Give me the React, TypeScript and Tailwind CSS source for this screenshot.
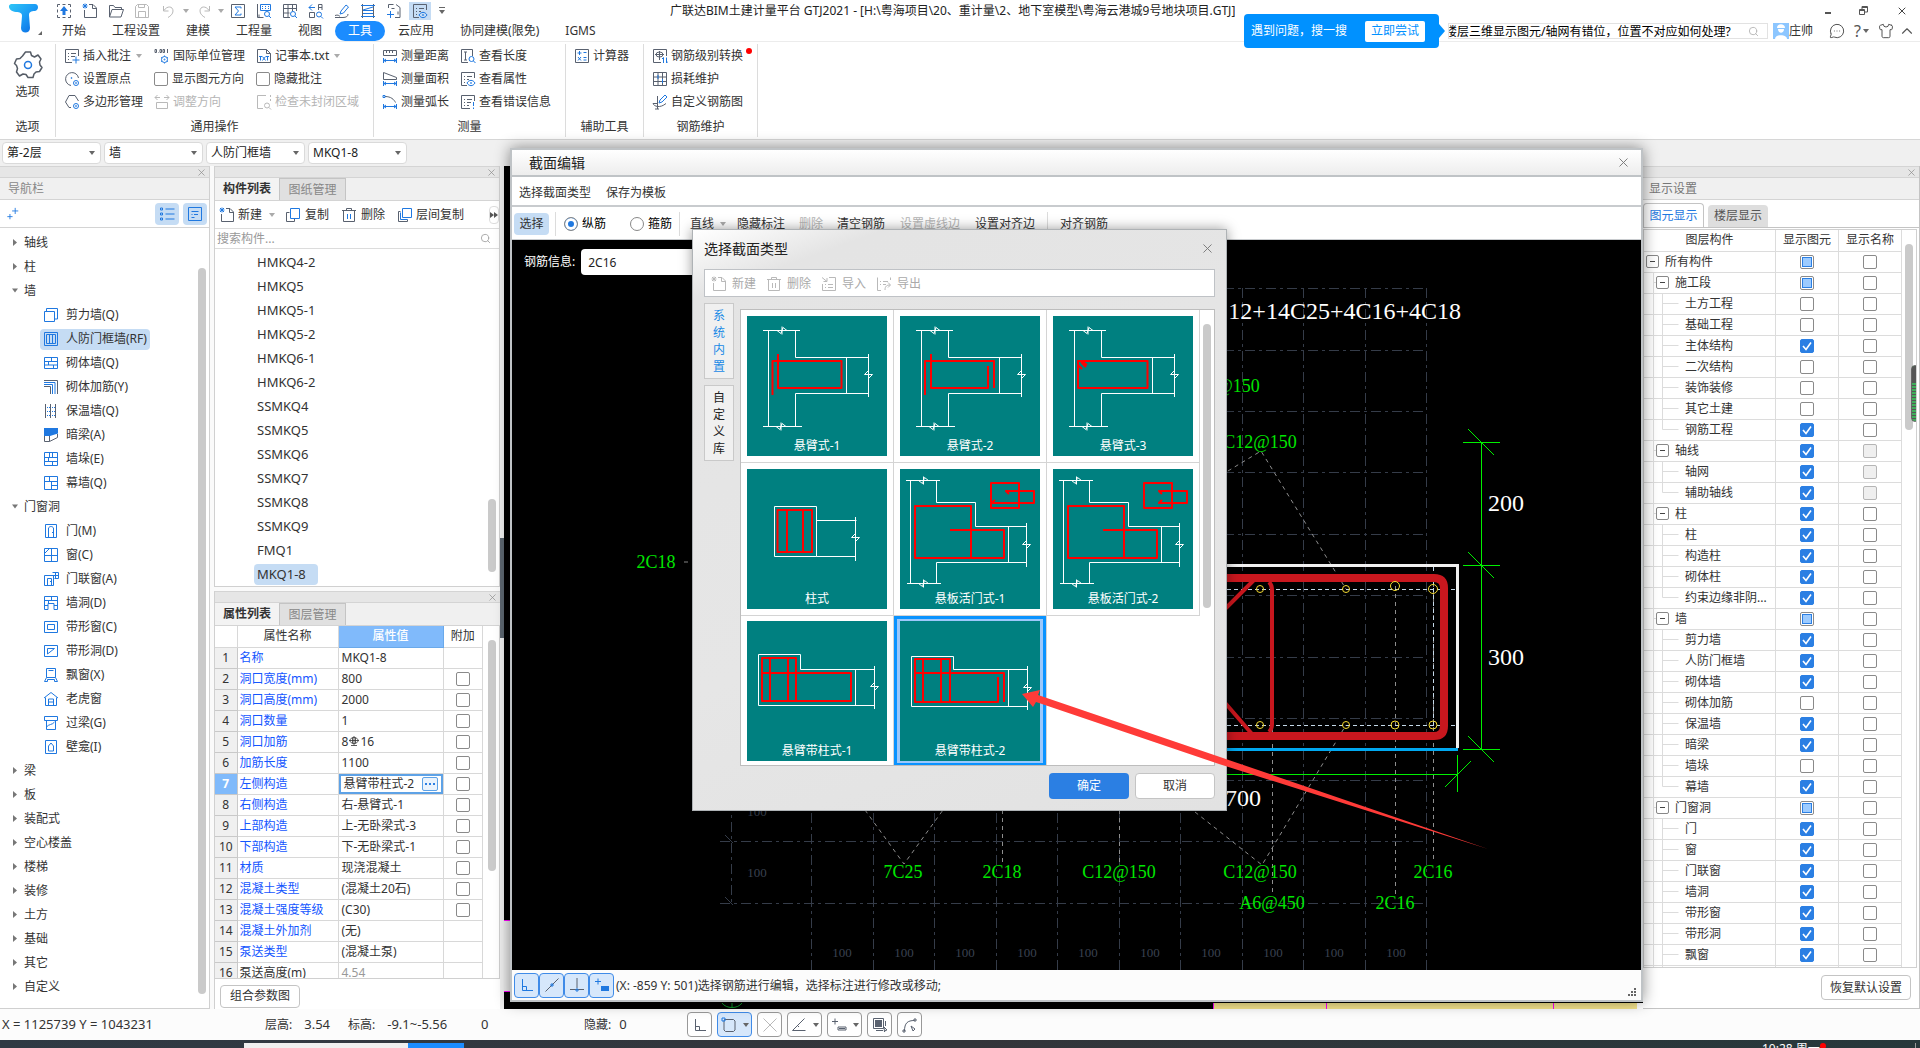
import { useState, type ReactNode } from 'react';
import { ChevronUp, MessageCircleMore, Search, Shirt, X } from 'lucide-react';
import clsx from 'clsx';

const FONT = "font-['Noto_Sans','Noto_Sans_CJK_SC',sans-serif]";

const SLATE = '#59616f';
const BLUE = '#1f78e0';
const MUTED = '#b9b9b9';

// d = slate stroke, b = blue stroke, f = blue fill
type Glyph = { d?: string; b?: string; f?: string };

const GLYPHS: Record<string, Glyph> = {
  upload: { d: 'M1.5 4V1.5H4M6.5 1.5h3M12 1.5h2.5V4M14.5 6.5v3M14.5 12v2.5H12M9.5 14.5h-3M4 14.5H1.5V12M1.5 9.5v-3', f: 'M8 3l4 5H9.5v4h-3V8H4z' },
  create: { d: 'M7 1.5h4l3.5 3.5v9.5h-12V7M10.5 1.5v4h4', b: 'M1 1l4 4M5 1L1 5M3 .5v5M.5 3h5' },
  open: { d: 'M1.5 14V2.5h4l1.5 2h6.5v2M1.5 14L4 6.5h11.5L13 14z' },
  save: { d: 'M1.5 3.5l2-2h9l2 2v11h-13zM4.5 14V8.5h7V14M4.5 1.5v3h6v-3' },
  undo: { d: 'M2.5 3v5h5M3 7.5C6 2.5 12 3 12 8c0 3-2.5 5-5 6.5' },
  redo: { d: 'M13.5 3v5h-5M13 7.5C10 2.5 4 3 4 8c0 3 2.5 5 5 6.5' },
  sum: { d: 'M1.5 1.5h13v13h-13z', b: 'M11 5.5V4H5l3.5 4L5 12h6v-1.5' },
  sheetFind: { d: 'M1.5 1v13.5h6M3 14.5v-3', b: 'M4.5 1.5h10v6h-10zM6 3.5h1M9 3.5h1M12 3.5h1M6 5.5h1M9 5.5h1M12 5.5h1M13.5 11a2.5 2.5 0 1 1-5 0 2.5 2.5 0 0 1 5 0M13 13l2 2' },
  gridFind: { d: 'M8 14.5H1.5v-13h13V8M1.5 5.5h13M1.5 10h6M6 1.5v13M10.5 1.5V8', b: 'M13.5 11a2.5 2.5 0 1 1-5 0 2.5 2.5 0 0 1 5 0M13 13l2 2' },
  swapFind: { d: 'M1.5 9.5h5v5h-5zM10.5 1.5h3.5V7M10.5 1.5V7M10.5 4.5H14', b: 'M1 4.5h6M4 1.5L1 4.5l3 3M13.5 11.5a2.5 2.5 0 1 1-5 0 2.5 2.5 0 0 1 5 0M13 13.5l2 2' },
  brush: { d: 'M1 14.5h8c3 0 5-1 5-3.5M1 12.5c3-1 4 0 5 1', b: 'M6 11l1-3 5-6 2.5 2-5 6z' },
  frame: { d: 'M2.5 1v14M13.5 1v14', b: 'M1 2.5h14M3 7.5h10M3 10.5h10M1 13.5h14M3 7L13 4' },
  addSheet: { d: 'M7.5 1.5h-5V5M10 1.5l4 3v10H9M12 8.5v3M5.5 5.5h3', b: 'M1 11.5h7M4.5 8v7' },
  sheetEye: { d: 'M7 14.5H1.5v-13h13V7M4 5.5h1M7 5.5h5M4 8.5h1M7 8.5h2M4 11.5h1', b: 'M7 12c2-3.5 6-3.5 8 0-2 3.5-6 3.5-8 0M11.5 12a.5.5 0 1 1-1 0 .5.5 0 0 1 1 0' },
  noteAdd: { d: 'M8 14.5H1.5v-13h13V8M4 5.5h1M7 5.5h5M4 8.5h1M7 8.5h4M4 11.5h1', b: 'M8.5 12h7M12 8.5v7' },
  unit: { d: 'M1 1.5v3h1.5v-3zM4 4.5h.5M6 1.5v3h1.5v-3zM9 1.5v3h1.5v-3zM13.5 1v4', b: 'M13.5 11.5a3 3 0 1 1-6 0 3 3 0 0 1 6 0M11 11.5a.5.5 0 1 1-1 0 .5.5 0 0 1 1 0M10.5 7.5v1M10.5 14.5v1M7 9.5l1 .5M14 9.5l-1 .5M7 13.5l1-.5M14 13.5l-1-.5' },
  txt: { d: 'M1.5 1.5h9l4 4v9h-13zM10.5 1.5v4h4', b: 'M3 8.5h3M4.5 8.5v4M6.5 8.5l3 4M9.5 8.5l-3 4M10 8.5h3M11.5 8.5v4' },
  origin: { d: 'M7 14.5A6.5 6.5 0 1 1 14.5 7', b: 'M8 7a.5.5 0 1 1-1 0 .5.5 0 0 1 1 0M14.5 12a2.5 2.5 0 1 1-5 0 2.5 2.5 0 0 1 5 0M12.5 12a.5.5 0 1 1-1 0 .5.5 0 0 1 1 0' },
  polygon: { d: 'M7 13.5H5L1.5 8 5 1.5h6L14.5 7', b: 'M14.5 12a2.5 2.5 0 1 1-5 0 2.5 2.5 0 0 1 5 0M12.5 12a.5.5 0 1 1-1 0 .5.5 0 0 1 1 0' },
  adjust: { d: 'M2.5 14.5v-6h11v6zM1 3.5h5M3.5 1L1 3.5 3.5 6M15 3.5h-5M12.5 1L15 3.5 12.5 6' },
  region: { d: 'M7 14.5H1.5v-13H10M14.5 1v2M14.5 5v2M13.5 11.5a2.5 2.5 0 1 1-5 0 2.5 2.5 0 0 1 5 0M13 13.5l2 2' },
  dist: { d: 'M1.5 2.5h13v5h-13zM4.5 2.5V5M7.5 2.5V5M10.5 2.5V5', b: 'M1.5 10v5M14.5 10v5M2 12.5h12M4 11l-2 1.5L4 14M12 11l2 1.5-2 1.5' },
  area: { d: 'M1.5 8.5v-7l13 5v2z', b: 'M1.5 10v5M14.5 10v5M2 12.5h12M4 11l-2 1.5L4 14M12 11l2 1.5-2 1.5' },
  arc: { d: 'M3 2.5c6 0 9 3 10.5 6', b: 'M1 1.5h2v2H1zM1.5 10v5M14.5 10v5M2 12.5h12M4 11l-2 1.5L4 14M12 11l2 1.5-2 1.5' },
  seeLen: { d: 'M8 14.5H1.5v-13h11V8M4 4h3M5.5 4v8M4 12h3', b: 'M14 11a2.5 2.5 0 1 1-5 0 2.5 2.5 0 0 1 5 0M13.5 13l2 2' },
  seeErr: { d: 'M10 14.5H1.5v-13h13V7M4 5.5h1M7 5.5h5M4 8.5h1M7 8.5h4M4 11.5h1M7 11.5h2', b: 'M13.5 8v4M13.5 13.5v1.5' },
  calc: { d: 'M1.5 1.5h13v13h-13z', b: 'M3.5 5h4M5.5 3v4M9.5 4.5h3M9.5 9.5h3M9.5 12h3M4 9l3 3.5M7 9l-3 3.5' },
  rebarConv: { d: 'M9 14.5H1.5v-13h13V8M3 6.5h9M7.5 3v9M11 6.5a3.5 2.5 0 1 1-7 0 3.5 2.5 0 0 1 7 0', b: 'M11.5 15V9.5L10 11M14.5 9.5V15L16 13.5' },
  grid: { d: 'M1.5 1.5h13v13h-13zM1.5 6h13M1.5 10.5h13M6 1.5v13M10.5 1.5v13', b: 'M6 4v4M10.5 8v4' },
  rebarEdit: { d: 'M5.5 2v13M1 9.5c1 3 7 5 13 0M1 9.5h4M3 15h4', b: 'M7 9l1-3 5-5 2 2-5 5z' },
  copy: { d: 'M4.5 5.5h-3v9h8v-3', b: 'M5.5 1.5h9v10h-9z' },
  trash: { d: 'M1 3.5h14M5.5 3.5v-2h5v2M2.5 3.5v11h11v-11', b: 'M6.5 7v5M9.5 7v5' },
  layerCopy: { d: 'M3.5 4.5h-2v10h9v-2', b: 'M5.5 1.5h9v9h-9zM3.5 5.5v7h7' },
  importIn: { d: 'M1 1.5l5 4M6 2v3.5H2.5M8 1.5h6.5v13h-13V8M7 8.5h5M7 11.5h5M4 8.5h1M4 11.5h1' },
  exportOut: { d: 'M14.5 4V1.5M5 14.5H1.5v-13M4 5.5h1M7 5.5h5M4 8.5h1M7 8.5h3M9 14c0-4 2-5 5-5M12 6.5L14.5 9 12 11.5' },
  list: { b: 'M1.5 2h2v2h-2zM1.5 7h2v2h-2zM1.5 12h2v2h-2zM6.5 3h9M6.5 8h9M6.5 13h9' },
  card: { b: 'M1.5 1.5h13v13h-13zM4.5 5.5h7M4.5 8.5h1M7 8.5h4M4.5 11.5h3' },
  sparkle: { b: 'M10.5 1v7M7 4.5h7M4.5 8v6M1.5 11h6' },
  wall: { b: 'M1.5 4.5h10v10h-10zM3.5 4v-2.5h11V12h-2.5' },
  frameWall: { b: 'M1.5 1.5h13v13h-13zM3.5 3.5h9v9h-9zM6.5 3.5v9M9.5 3.5v9' },
  brick: { b: 'M1.5 2.5h13v11h-13zM1.5 6.5h13M1.5 10h13M8.5 2.5v4M5.5 6.5V10M10.5 10v3.5' },
  brickBar: { d: 'M1 1.5h13.5V15M1 7.5h6.5V15', b: 'M1 3.5h11V15M1 5.5h8.5V15' },
  insul: { d: 'M2.5 1v14M7.5 1v14M12.5 1v14', b: 'M4 4.5h1M6 4.5h1M9 4.5h1M11 4.5h1M4 8.5h1M6 8.5h1M9 8.5h1M11 8.5h1M4 12.5h1M6 12.5h1M9 12.5h1M11 12.5h1' },
  hiddenBeam: { f: 'M1 1h14v5.5L7 9H1z', d: 'M1.5 9v5.5h5l8-4V7M6.5 9v5.5' },
  buttress: { b: 'M1.5 1.5h13v13h-13zM1.5 6.5h13M1.5 10.5h13M5.5 6.5v4M9.5 1.5v5M6.5 1.5v5M9.5 10.5v4' },
  curtain: { b: 'M1.5 1.5h13v13h-13zM1.5 6.5h13M6.5 1.5v5M8.5 6.5v8M8.5 10.5h6' },
  door: { b: 'M2.5 1.5h11v13h-11zM5.5 14.5V5c1-2 4-2 5 0v9.5M9 9.5h1.5' },
  window: { b: 'M1.5 1.5h13v13h-13zM8.5 1.5v13M1.5 8.5h13M2 6l4.5-4.5' },
  doorWin: { b: 'M1.5 4.5h9v10h-9zM4.5 14.5v-7h4v7M7 10.5h1M9.5 1.5h6v6h-4M12.5 1.5v6M9.5 4.5h6' },
  wallHole: { b: 'M1.5 14.5v-13h13v13h-3.5v-6h-6v6zM1.5 5.5h13M8.5 1.5v4M1.5 10.5H5M11 10.5h3.5M5.5 5.5v3' },
  bandWin: { b: 'M1.5 2.5h13v11h-13zM4.5 5.5h7v5h-7z' },
  bandHole: { b: 'M1.5 2.5h13v11h-13zM4.5 11V5.5h7z' },
  bay: { b: 'M3.5 1.5h9v9h-9zM5.5 3.5h5M3.5 10.5l-2 4h3v-2h7v2h3l-2-4' },
  dormer: { b: 'M1 7l7-5.5L15 7M2.5 6.5v8h11v-8M5.5 14V8h5v6M5.5 11h5' },
  lintel: { b: 'M1.5 1.5h13v4h-13zM3.5 5.5v9h9v-9M3.5 12c2-3 6-2 8-5' },
  niche: { b: 'M2.5 1.5h11v13h-11zM5.5 12V7L8 4l2.5 3v5z' },
  ortho: { d: 'M3.5 2v11.5H14M3.5 9.5h4v4' },
  orthoB: { b: 'M3.5 2v11.5H14M3.5 9.5h4v4' },
  diag: { d: 'M1.5 14.5l13-13', b: 'M7 7h2v2H7z' },
  perp: { d: 'M1 12.5h14M8 1v10', b: 'M7 12h2v2H7z' },
  plusBar: { b: 'M1 4.5h6M4 1.5v6', f: 'M7 9h8v5H7z' },
  plusBarD: { d: 'M1 4.5h6M4 1.5v6M7 10h8v3H7zM8 11.5h6' },
  roundBox: { d: 'M3.5 2.5h9l1.5 1.5v9l-1.5 1.5h-8L3 13V4z', b: 'M1 1h3v3H1z' },
  cross: { d: 'M1.5 1.5l13 13M14.5 1.5l-13 13' },
  angle: { d: 'M1.5 13.5h13M1.5 13.5l12-12M6 8l2 2' },
  layers: { d: 'M4 13.5h7M13.5 4v5M1.5 1.5h10v10h-10zM3 3.5h7M3 4.5h7M3 5.5h7M3 6.5h7M3 7.5h7M3 8.5h7M3 9.5h7M12 10l3 3-2 .5-.5 1.5z' },
  curve: { d: 'M2.5 14c0-8 3-10.5 10-10.5M1 13h2v2H1zM12 2h2v2h-2zM9 9l4 3-2 2z' },
};

function Icon({ name, muted, size = 16 }: { name: string; muted?: boolean; size?: number }) {
  const g = GLYPHS[name];
  return (
    <svg width={size} height={size} viewBox="0 0 16 16" fill="none" className="shrink-0" aria-hidden="true">
      {g.f && <path d={g.f} fill={BLUE} />}
      {g.d && <path d={g.d} stroke={muted ? MUTED : SLATE} />}
      {g.b && <path d={g.b} stroke={muted ? MUTED : BLUE} />}
    </svg>
  );
}

function Caret({ muted }: { muted?: boolean }) {
  return (
    <svg width="6" height="4" viewBox="0 0 6 4" className="shrink-0" aria-hidden="true">
      <path d="M0 0h6L3 4z" fill={muted ? '#aaa' : '#666'} />
    </svg>
  );
}

type CheckState = 'on' | 'off' | 'mixed' | 'disabled';

function Check({ state = 'off', label, id }: { state?: CheckState; label?: string; id?: string }) {
  return (
    <span className="relative inline-grid size-3.5 shrink-0 place-items-center align-middle">
      <input
        id={id}
        type="checkbox"
        aria-label={label}
        defaultChecked={state === 'on'}
        disabled={state === 'disabled'}
        className="peer size-3.5 appearance-none rounded-xs border border-[#8a8a8a] bg-white checked:border-[#2b7fe3] checked:bg-[#2b7fe3] disabled:border-[#b5b5b5] disabled:bg-[#efefef]"
      />
      <svg viewBox="0 0 14 14" fill="none" className="pointer-events-none absolute hidden size-3.5 peer-checked:block">
        <path d="M3 7l3 3.5 5-7" stroke="#fff" strokeWidth="1.6" />
      </svg>
      {state === 'mixed' && <span className="pointer-events-none absolute size-2.5 border border-[#2b7fe3] bg-[#9ccbff]" />}
    </span>
  );
}

/* ---------- header ---------- */

const QUICK: { icon: string; muted?: boolean; caret?: boolean; on?: boolean }[] = [
  { icon: 'upload' }, { icon: 'create' }, { icon: 'open' }, { icon: 'save', muted: true },
  { icon: 'undo', muted: true, caret: true }, { icon: 'redo', muted: true, caret: true },
  { icon: 'sum' }, { icon: 'sheetFind' }, { icon: 'gridFind' }, { icon: 'swapFind' },
  { icon: 'brush' }, { icon: 'frame' }, { icon: 'addSheet' }, { icon: 'sheetEye', on: true },
];

const TABS = ['开始', '工程设置', '建模', '工程量', '视图', '工具', '云应用', '协同建模(限免)', 'IGMS'];

function Header() {
  const [tab, setTab] = useState('工具');
  return (
    <header className="flex h-[42px] shrink-0 border-b border-[#ececec] bg-white">
      <div className="flex w-[49px] shrink-0 pl-2">
        <svg width="38" height="36" viewBox="0 0 38 36" aria-label="广联达">
          <defs>
            <linearGradient id="brand" x1="0" y1="0" x2="1" y2="1">
              <stop offset="0" stopColor="#2fc6f6" />
              <stop offset="0.5" stopColor="#1a9bf5" />
              <stop offset="1" stopColor="#0a66e0" />
            </linearGradient>
          </defs>
          <path d="M3 4h24c4 0 4 6 0 7-4 0-6 1-6 4l1 13c0 6-9 6-9 0l1-12c0-3-2-4-6-4C1 12-1 5 3 4z" fill="url(#brand)" />
          <path d="M34 31v4h-4z" fill="#666" />
        </svg>
      </div>
      <div className="flex min-w-0 flex-1 flex-col">
        <div className="flex h-[21px] shrink-0 items-center">
          <div className="flex w-[621px] shrink-0 items-center pl-0.5">
            {QUICK.map((q) => (
              <button key={q.icon} className={clsx('flex h-[18px] items-center', q.caret ? 'w-[35px] gap-1.5 pl-1.5' : q.on ? 'mx-0.5 w-[22px] justify-center bg-[#c5dcf4]' : 'w-[26px] justify-center')}>
                <Icon name={q.icon} muted={q.muted} />
                {q.caret && <Caret muted />}
              </button>
            ))}
            <button aria-label="自定义快速访问" className="ml-1.5 flex flex-col items-center gap-0.5">
              <span className="h-px w-1.5 bg-[#666]" />
              <Caret />
            </button>
          </div>
          <h1 className="truncate text-xs text-[#222]">广联达BIM土建计量平台 GTJ2021 - [H:\粤海项目\20、重计量\2、地下室模型\粤海云港城9号地块项目.GTJ]</h1>
          <div className="ml-auto flex shrink-0 items-center gap-7 pr-3">
            <button aria-label="最小化" className="mt-1 h-0.5 w-1.5 bg-[#555]" />
            <button aria-label="还原">
              <svg width="9" height="9" viewBox="0 0 9 9" fill="none" stroke="#555">
                <path d="M.5 3.5h5v5h-5zM3 3V.5h5.5V6H6M.5 4.5h5M3 1.5h5" />
              </svg>
            </button>
            <button aria-label="关闭"><X size={12} color="#444" /></button>
          </div>
        </div>
        <div className="flex min-h-0 flex-1 items-center">
          <nav className="flex">
            {TABS.map((t) => (
              <button key={t} onClick={() => setTab(t)} className={clsx('h-5 rounded-full px-[13px] text-xs leading-5', tab === t ? 'bg-[#1b8cff] text-white' : 'text-[#333]')}>
                {t}
              </button>
            ))}
          </nav>
          <div className="relative ml-auto flex h-4 w-[320px] items-center border border-[#e2e2e2] bg-white">
            <div className="absolute right-full z-10 mr-2.5 flex h-[34px] w-[195px] items-center justify-between rounded-sm bg-[#0091ff] pr-3.5 pl-[7px] text-xs text-white">
              遇到问题，搜一搜
              <button className="h-[21px] w-[60px] rounded-xs bg-white text-[#0091ff]">立即尝试</button>
              <svg width="6" height="14" viewBox="0 0 6 14" className="absolute left-full" aria-hidden="true"><path d="M0 0l6 7-6 7z" fill="#0091ff" /></svg>
            </div>
            <input aria-label="搜索问题" defaultValue="楼层三维显示图元/轴网有错位，位置不对应如何处理?" className="h-full min-w-0 flex-1 -indent-1 text-xs leading-4 text-black outline-none" />
            <Search size={11} color="#b5b5b5" className="mr-2" />
          </div>
          <button className="ml-[5px] flex items-center text-xs text-[#333]">
            <svg width="16" height="16" viewBox="0 0 16 16" aria-hidden="true">
              <path d="M0 0h16v16H0z" fill="#8cc6ff" />
              <path d="M4 5c0-5 8-5 8 0H4zM5 6h6c0 5-6 5-6 0zM2 16c0-5 12-5 12 0z" fill="#fff" />
            </svg>
            庄帅
          </button>
          <div className="flex items-center pr-1 pl-4 text-[#555]">
            <button aria-label="消息" className="w-[25px]"><MessageCircleMore size={16} strokeWidth={1.5} /></button>
            <button aria-label="帮助" className="flex w-6 items-center gap-0.5 text-base leading-4">?<Caret /></button>
            <button aria-label="皮肤" className="w-5"><Shirt size={16} strokeWidth={1.5} /></button>
            <button aria-label="收起"><ChevronUp size={18} strokeWidth={1.5} /></button>
          </div>
        </div>
      </div>
    </header>
  );
}

/* ---------- ribbon ---------- */

function Tool({ icon, label, muted, caret, dot }: { icon: string; label: string; muted?: boolean; caret?: boolean; dot?: boolean }) {
  return (
    <button className={clsx('flex h-[23px] items-center gap-[3px] whitespace-nowrap', muted && 'text-[#b5b5b5]')}>
      <Icon name={icon} muted={muted} />
      {label}
      {caret && <span className="ml-0.5"><Caret muted /></span>}
      {dot && <span className="mb-2.5 size-1.5 rounded-full bg-[#f00]" />}
    </button>
  );
}

function CheckTool({ label, id }: { label: string; id: string }) {
  return (
    <label htmlFor={id} className="flex h-[23px] items-center gap-1 whitespace-nowrap">
      <Check id={id} />
      {label}
    </label>
  );
}

function Group({ title, className, children }: { title: string; className: string; children: ReactNode }) {
  return (
    <section className={clsx('my-0.5 flex flex-col border-r border-[#dcdcdc]', className)}>
      <div className="flex flex-1">{children}</div>
      <h2 className="h-[18px] text-center leading-4">{title}</h2>
    </section>
  );
}

function Ribbon() {
  return (
    <div className="flex h-[98px] shrink-0 border-b border-[#d6d6d6] bg-white text-xs text-[#333]">
      <Group title="选项" className="w-14">
        <button className="flex w-full flex-col items-center pt-1.5">
          <svg width="30" height="30" viewBox="0 0 30 30" fill="none" aria-hidden="true">
            <path d="M12.5 2h5l1 3.5 3 1.5 3.5-2 3 4-1.5 3 .5 3 2 2.5-2.5 4-3.5.5-2 2-1 3.5h-5l-2-3-3-.5-3.5 2-3-4 1-3.5-1-3-2-2 2-4.5 3.5-.5 2.5-2.5z" stroke="#555c66" strokeWidth="1.5" strokeLinejoin="round" />
            <circle cx="15" cy="15" r="3.5" stroke={BLUE} strokeWidth="1.5" />
          </svg>
          <span className="mt-1">选项</span>
        </button>
      </Group>
      <Group title="通用操作" className="w-[318px]">
        <div className="w-[98px] pl-2">
          <Tool icon="noteAdd" label="插入批注" caret />
          <Tool icon="origin" label="设置原点" />
          <Tool icon="polygon" label="多边形管理" />
        </div>
        <div className="w-[102px]">
          <Tool icon="unit" label="国际单位管理" />
          <CheckTool id="show-dir" label="显示图元方向" />
          <Tool icon="adjust" label="调整方向" muted />
        </div>
        <div>
          <Tool icon="txt" label="记事本.txt" caret />
          <CheckTool id="hide-note" label="隐藏批注" />
          <Tool icon="region" label="检查未封闭区域" muted />
        </div>
      </Group>
      <Group title="测量" className="w-48">
        <div className="w-[86px] pl-2">
          <Tool icon="dist" label="测量距离" />
          <Tool icon="area" label="测量面积" />
          <Tool icon="arc" label="测量弧长" />
        </div>
        <div>
          <Tool icon="seeLen" label="查看长度" />
          <Tool icon="sheetEye" label="查看属性" />
          <Tool icon="seeErr" label="查看错误信息" />
        </div>
      </Group>
      <Group title="辅助工具" className="w-[78px] px-2">
        <Tool icon="calc" label="计算器" />
      </Group>
      <Group title="钢筋维护" className="w-[114px] px-2">
        <div>
          <Tool icon="rebarConv" label="钢筋级别转换" dot />
          <Tool icon="grid" label="损耗维护" />
          <Tool icon="rebarEdit" label="自定义钢筋图" />
        </div>
      </Group>
    </div>
  );
}

function Combos() {
  return (
    <div className="flex h-[26px] shrink-0 items-center gap-[3px] bg-[#f0f0f0] pl-0.5">
      {['第-2层', '墙', '人防门框墙', 'MKQ1-8'].map((v) => (
        <div key={v} className="relative flex w-[99px] items-center">
          <select aria-label={v} className="h-[22px] w-full appearance-none rounded-sm border border-[#dadada] bg-white pl-1 text-xs text-[#222]">
            <option>{v}</option>
          </select>
          <span className="pointer-events-none absolute right-1.5 flex"><Caret /></span>
        </div>
      ))}
    </div>
  );
}

/* ---------- left panels ---------- */

function Strip() {
  return (
    <div className="flex h-3 shrink-0 items-center justify-end border-y border-[#d4d4d4] bg-[#e6e6e6] pr-0.5">
      <button aria-label="关闭面板"><X size={11} color="#8a8a8a" strokeWidth={1.5} /></button>
    </div>
  );
}

type NavNode = { name: string; items?: [string, string][] };

const NAV: NavNode[] = [
  { name: '轴线' },
  { name: '柱' },
  {
    name: '墙',
    items: [
      ['wall', '剪力墙(Q)'], ['frameWall', '人防门框墙(RF)'], ['brick', '砌体墙(Q)'], ['brickBar', '砌体加筋(Y)'],
      ['insul', '保温墙(Q)'], ['hiddenBeam', '暗梁(A)'], ['buttress', '墙垛(E)'], ['curtain', '幕墙(Q)'],
    ],
  },
  {
    name: '门窗洞',
    items: [
      ['door', '门(M)'], ['window', '窗(C)'], ['doorWin', '门联窗(A)'], ['wallHole', '墙洞(D)'], ['bandWin', '带形窗(C)'],
      ['bandHole', '带形洞(D)'], ['bay', '飘窗(X)'], ['dormer', '老虎窗'], ['lintel', '过梁(G)'], ['niche', '壁龛(I)'],
    ],
  },
  { name: '梁' }, { name: '板' }, { name: '装配式' }, { name: '空心楼盖' }, { name: '楼梯' },
  { name: '装修' }, { name: '土方' }, { name: '基础' }, { name: '其它' }, { name: '自定义' },
];

function NavPanel() {
  return (
    <aside className="flex w-[210px] shrink-0 flex-col border-r border-b border-[#d0d0d0] bg-white">
      <Strip />
      <h2 className="h-[22px] shrink-0 border-b border-[#d4d4d4] bg-[#f0f0f0] pl-2 text-xs leading-[22px] text-[#888]">导航栏</h2>
      <div className="flex h-7 shrink-0 items-center gap-1 border-b border-[#d4d4d4] px-1.5">
        <button aria-label="收藏" className="mr-auto"><Icon name="sparkle" size={14} /></button>
        <button aria-label="列表" className="grid h-[22px] w-6 place-items-center rounded-sm bg-[#c5dcf4]"><Icon name="list" /></button>
        <button aria-label="详情" className="-mr-1 grid h-[22px] w-6 place-items-center rounded-sm bg-[#c5dcf4]"><Icon name="card" /></button>
      </div>
      <div className="flex min-h-0 flex-1 overflow-hidden">
        <ul className="flex-1 pt-[3px] text-xs text-[#333]">
          {NAV.map((n) => (
            <li key={n.name}>
              <button className="flex h-6 items-center pl-3">
                <svg width="12" height="8" viewBox="0 0 12 8" aria-hidden="true"><path d={n.items ? 'M0 1.5h6L3 5.5z' : 'M1 0v7l4-3.5z'} fill="#777" /></svg>
                {n.name}
              </button>
              {n.items && (
                <ul>
                  {n.items.map(([icon, label]) => (
                    <li key={label} className="flex h-6 items-center pl-10">
                      <button className={clsx('flex h-[21px] items-center gap-[7px] rounded-sm px-[3px]', icon === 'frameWall' && 'bg-[#c5dcf4]')}>
                        <Icon name={icon} />
                        {label}
                      </button>
                    </li>
                  ))}
                </ul>
              )}
            </li>
          ))}
        </ul>
        <div className="mt-10 mr-[3px] mb-3.5 w-2 rounded-full bg-[#cacaca]" />
      </div>
    </aside>
  );
}

function PanelTabs({ tabs }: { tabs: [string, string] }) {
  return (
    <div className="flex h-[23px] shrink-0 border-b border-[#d4d4d4] bg-[#f0f0f0] text-xs leading-[22px]">
      <button className="w-[65px] border-r border-[#c4c4c4] bg-[#f3f3f3] font-bold text-[#333]">{tabs[0]}</button>
      <button className="w-[66px] border-t border-r border-[#c4c4c4] bg-[#e0e0e0] text-[#888]">{tabs[1]}</button>
    </div>
  );
}

const MEMBERS = ['HMKQ4-2', 'HMKQ5', 'HMKQ5-1', 'HMKQ5-2', 'HMKQ6-1', 'HMKQ6-2', 'SSMKQ4', 'SSMKQ5', 'SSMKQ6', 'SSMKQ7', 'SSMKQ8', 'SSMKQ9', 'FMQ1', 'MKQ1-8'];

function MemberPanel() {
  return (
    <section className="flex shrink-0 flex-col border-x border-b border-[#d0d0d0] bg-white">
      <Strip />
      <PanelTabs tabs={['构件列表', '图纸管理']} />
      <div className="flex h-7 shrink-0 items-center border-b border-[#dcdcdc] pl-1 text-xs text-[#333]">
        <button className="mr-2.5 flex items-center gap-[3px]"><Icon name="create" />新建 <span className="ml-1"><Caret muted /></span></button>
        <button className="mr-3 flex items-center gap-1"><Icon name="copy" />复制</button>
        <button className="mr-3 flex items-center gap-1"><Icon name="trash" />删除</button>
        <button className="flex items-center gap-[3px]"><Icon name="layerCopy" />层间复制</button>
        <button aria-label="更多" className="ml-auto flex h-[18px] w-2.5 items-center rounded-sm border border-[#ddd]">
          <svg width="8" height="6" viewBox="0 0 8 6"><path d="M0 0l4 3-4 3zM4 0l4 3-4 3z" fill="#555" /></svg>
        </button>
      </div>
      <div className="flex h-5 shrink-0 items-center border-b border-[#dcdcdc] pr-2 pl-0.5">
        <input aria-label="搜索构件" placeholder="搜索构件..." className="min-w-0 flex-1 text-xs leading-4 outline-none placeholder:text-[#999]" />
        <Search size={11} color="#a5a5a5" />
      </div>
      <div className="flex pt-px">
        <ul className="flex-1 text-[13px] text-[#333]">
          {MEMBERS.map((m) => (
            <li key={m} className="flex h-6 items-center pl-[39px]">
              <button className={clsx('h-[21px] rounded-sm pr-3 pl-[3px] leading-5', m === 'MKQ1-8' && 'bg-[#c5dcf4]')}>{m}</button>
            </li>
          ))}
        </ul>
        <div className="mr-[3px] mb-3.5 h-[73px] w-2 self-end rounded-full bg-[#cacaca]" />
      </div>
    </section>
  );
}

const rebar = (
  <span className="inline-flex items-center">
    8
    <svg width="12" height="11" viewBox="0 0 12 11" fill="none" stroke="#333" strokeWidth="0.8" aria-label="HRB400">
      <path d="M1 4.5h10M4.500 1.500v6M7.500 1.500v6M6 0v9.500M3 9.500h6M2 4.500c0-4 8-4 8 0s-8 4-8 0" />
    </svg>
    16
  </span>
);

const PROPS: { name: string; value: ReactNode; extra: boolean }[] = [
  { name: '名称', value: 'MKQ1-8', extra: false },
  { name: '洞口宽度(mm)', value: '800', extra: true },
  { name: '洞口高度(mm)', value: '2000', extra: true },
  { name: '洞口数量', value: '1', extra: true },
  { name: '洞口加筋', value: rebar, extra: true },
  { name: '加筋长度', value: '1100', extra: true },
  { name: '左侧构造', value: '悬臂带柱式-2', extra: true },
  { name: '右侧构造', value: '右-悬臂式-1', extra: true },
  { name: '上部构造', value: '上-无卧梁式-3', extra: true },
  { name: '下部构造', value: '下-无卧梁式-1', extra: true },
  { name: '材质', value: '现浇混凝土', extra: true },
  { name: '混凝土类型', value: '(混凝土20石)', extra: true },
  { name: '混凝土强度等级', value: '(C30)', extra: true },
  { name: '混凝土外加剂', value: '(无)', extra: false },
  { name: '泵送类型', value: '(混凝土泵)', extra: false },
  { name: '泵送高度(m)', value: '4.54', extra: false },
];

function PropertyPanel() {
  return (
    <section className="mt-1 flex min-h-0 flex-1 flex-col border-l border-[#d0d0d0] bg-white">
      <Strip />
      <PanelTabs tabs={['属性列表', '图层管理']} />
      <div className="flex min-h-0 flex-1 overflow-hidden border-r border-b border-[#d0d0d0]">
        <table className="w-[268px] table-fixed border-collapse self-start text-xs text-[#333]">
          <colgroup>
            <col className="w-[22px]" />
            <col className="w-[101px]" />
            <col className="w-[105px]" />
            <col />
          </colgroup>
          <thead>
            <tr className="h-[21px] leading-4">
              <th className="border-r border-b border-[#d8d8d8] p-0" />
              <th className="border-r border-b border-[#d8d8d8] p-0 font-normal">属性名称</th>
              <th className="border-r border-b border-[#6aa9ea] bg-[#80bafb] p-0 font-medium text-white">属性值</th>
              <th className="border-r border-b border-[#d8d8d8] p-0 font-normal">附加</th>
            </tr>
          </thead>
          <tbody>
            {PROPS.map((p, i) => {
              const active = i === 6;
              const last = i === 15;
              return (
                <tr key={p.name} className="h-[21px] leading-4">
                  <td className={clsx('border-r border-b border-[#c9c9c9] p-0 text-center', active ? 'bg-[#80bafb] font-bold text-white' : 'bg-[#f0f0f0]')}>{i + 1}</td>
                  <td className={clsx('border-r border-b border-[#d8d8d8] p-0 pl-0.5 whitespace-nowrap', !last && 'text-[#1456ff]')}>{p.name}</td>
                  <td className={clsx('border-r border-b border-[#d8d8d8] p-0 whitespace-nowrap', !active && 'pl-[3px]', last && 'text-[#999]')}>
                    {active ? (
                      <span className="flex h-5 items-center justify-between border-2 border-[#5ea2e6] px-[3px]">
                        {p.value}
                        <button aria-label="选择" className="flex h-3.5 w-4 items-center justify-center gap-0.5 rounded-xs border border-[#5ea2e6] bg-[#eaf3fd]">
                          <span className="size-0.5 bg-[#2b7fe3]" />
                          <span className="size-0.5 bg-[#2b7fe3]" />
                          <span className="size-0.5 bg-[#2b7fe3]" />
                        </button>
                      </span>
                    ) : p.value}
                  </td>
                  <td className="border-r border-b border-[#d8d8d8] p-0 text-center leading-none">{p.extra && <Check label={`${p.name}附加`} />}</td>
                </tr>
              );
            })}
          </tbody>
        </table>
        <div className="mt-3.5 mr-[3px] ml-auto h-[231px] w-2 rounded-full bg-[#cacaca]" />
      </div>
      <div className="h-[30px] shrink-0 pt-[3px] pl-[5px]">
        <button className="h-[23px] w-20 rounded-sm border border-[#c4c4c4] bg-white text-xs leading-5 text-[#333]">组合参数图</button>
      </div>
    </section>
  );
}

/* ---------- section thumbnails ---------- */

// zigzag break marks on a horizontal / vertical line
const hBreak = (x: number, y: number) => `M${x - 5} ${y}l4 3 2-6 4 3M${x} ${y - 4}v8`;
const vBreak = (x: number, y: number) => `M${x - 4} ${y}h8l-4 4v-8l-4 4`;

const T_BODY = `M16 14.5h37M21.5 14.5v96M48.5 14.5v27h73M99.5 41.5v36M121.5 38v43M121.5 77.5h-73v33M16 110.5h39${hBreak(35, 14.5)}${hBreak(34, 110.5)}${vBreak(121.5, 58.5)}`;
const SLAB_BODY = `M6 11.5h34M10.5 11.5v103M36.5 11.5v22h39v24h51M108.5 57.5v36M126.5 54v44M126.5 93.5h-90v21M7 114.5h34${hBreak(23.5, 11.5)}${hBreak(23.5, 114.5)}${vBreak(126.5, 75.5)}`;

type Section = { name: string; white: string; red: string };

const SECTIONS: Section[] = [
  { name: '悬臂式-1', white: T_BODY, red: 'M25.5 79V45h69v27H31V38' },
  { name: '悬臂式-2', white: T_BODY, red: 'M25 79V45h69v27M31 38v34h57V50' },
  { name: '悬臂式-3', white: T_BODY, red: 'M25 45h69.5v27H25zM28 46l5 5M25 49l4 4M29 45l5 4' },
  { name: '柱式', white: `M27.5 37.5h42v50h-42zM69.5 51.5h40M69.5 87.5h39M108.5 48v44${vBreak(108.5, 68.5)}`, red: 'M30.5 41h34.5v42H30.5zM40 41v42M56 41v42' },
  { name: '悬板活门式-1', white: SLAB_BODY, red: 'M15 37h56v52H15zM50 61h54v28H71M91 14h28v25H91zM91 34h43V22h-28l3 3M91 34l4-3' },
  { name: '悬板活门式-2', white: SLAB_BODY, red: 'M15 37h56v52H15zM50 61h54v28H71M91 14h28v25H91zM109 31l-3 3h28V22h-28l3 3' },
  { name: '悬臂带柱式-1', white: `M127 84.5H11.5v-51h42v15H127M108.5 48.5v36M127.5 45v43${vBreak(127.5, 65.5)}`, red: 'M15 37h34v43H15zM23 37v43M41 37v43M15 52h89v28H15' },
  { name: '悬臂带柱式-2', white: `M127 85.5H11.5v-50h42v13H127M108.5 48.5v37M127.5 45v44${vBreak(127.5, 66.5)}`, red: 'M15 38h35v43H15zM23 38v43M41 38v43M15 52h89v29M50 81h48V56' },
];

function SectionDialog() {
  const [picked, setPicked] = useState(7);
  return (
    <div role="dialog" aria-label="选择截面类型" className="absolute top-[79px] left-[180px] z-10 flex h-[582px] w-[535px] flex-col border border-[#aeb2b5] bg-[linear-gradient(160deg,#ffffff_0%,#e4e4e4_9%,#e6e6e6_60%,#e2e2e2_100%)] px-[11px] text-xs shadow-[0_0_12px_rgba(0,0,0,0.4)]">
      <div className="flex h-[39px] shrink-0 items-center justify-between pb-0.5">
        <h2 className="text-sm text-[#222]">选择截面类型</h2>
        <button aria-label="关闭"><X size={15} color="#777" strokeWidth={1.5} /></button>
      </div>
      <div className="flex h-7 shrink-0 items-center gap-2.5 border border-[#bfc2c6] bg-white pt-0.5 pl-1.5 text-[#aaa]">
        {[['create', '新建'], ['trash', '删除'], ['importIn', '导入'], ['exportOut', '导出']].map(([icon, label]) => (
          <button key={icon} disabled className="flex items-center gap-[5px]"><Icon name={icon} muted />{label}</button>
        ))}
      </div>
      <div className="flex min-h-0 flex-1 pt-1.5">
        <div className="flex w-[30px] shrink-0 flex-col gap-1.5">
          {['系统内置', '自定义库'].map((t, i) => (
            <button key={t} className={clsx('h-[76px] border border-[#c9c9c9] bg-[#f0f0f0] px-2 leading-[17px] break-all', i === 0 ? 'text-[#1a8ae6]' : 'text-[#222]')}>{t}</button>
          ))}
        </div>
        <div className="mt-1.5 ml-1.5 flex min-w-0 flex-1 overflow-hidden border border-[#bdbdbd] bg-white">
          <div className="grid grid-cols-[153px_153px_153px] content-start">
            {SECTIONS.map((s, i) => (
              <button
                key={s.name}
                onClick={() => setPicked(i)}
                className={clsx('border-r border-[#d4d4d4]', i < 6 ? 'h-[153px] border-b' : 'h-[150px]', picked === i ? 'p-0' : 'px-1.5')}
              >
                <span className={clsx('block', picked === i && 'h-full border-[3px] border-[#0a93ff] bg-[#9cc8fb] px-[3px] pt-0.5')}>
                  <svg width="140" height="140" viewBox="0 0 140 140" fill="none" className="bg-[#008080]">
                    <path d={s.white} stroke="#fff" />
                    <path d={s.red} stroke="#f00" strokeWidth="2" strokeLinejoin="round" />
                    <text x="70" y="134" textAnchor="middle" fontSize="12" fill="#fff">{s.name}</text>
                  </svg>
                </span>
              </button>
            ))}
          </div>
          <div className="mt-3.5 ml-[3px] h-[284px] w-2 rounded-full bg-[#cacaca]" />
        </div>
      </div>
      <div className="flex h-11 shrink-0 justify-end gap-1.5 pt-[7px]">
        <button className="h-[26px] w-20 rounded-sm bg-[#2b7fe3] text-white">确定</button>
        <button className="h-[26px] w-20 rounded-sm border border-[#c4c4c4] bg-white text-[#333]">取消</button>
      </div>
    </div>
  );
}

/* ---------- section drawing ---------- */

const GRID_X = [811, 873, 934, 996, 1057, 1119, 1180, 1242, 1303, 1365, 1426];
const GRID_Y = [288, 350, 411, 472, 534, 595, 657, 718, 780, 841, 903];
const BARS: [number, number, number][] = [
  [1260, 589, 3.5], [1346, 589, 3.5], [1395, 586, 4.5], [1433, 589, 4.5],
  [1260, 725, 3.5], [1346, 725, 3.5], [1395, 725, 4], [1433, 725, 4],
];
const TAGS: [number, number, string][] = [
  [656, 562, '2C18'], [1223, 386, 'C12@150'], [1260, 442, 'C12@150'], [903, 872, '7C25'], [1002, 872, '2C18'],
  [1119, 872, 'C12@150'], [1260, 872, 'C12@150'], [1433, 872, '2C16'], [1272, 903, 'A6@450'], [1395, 903, '2C16'],
];

function Drawing() {
  return (
    <svg viewBox="512 240 1128 730" preserveAspectRatio="xMinYMin meet" fill="none" className="size-full font-['Liberation_Serif',serif]">
      <g stroke="#353c49" strokeDasharray="10 4 3 4">
        {GRID_X.map((x) => <path key={x} d={`M${x + 0.5} 288V970`} />)}
        {GRID_Y.map((y) => <path key={y} d={`M720 ${y + 0.5}H1427`} />)}
        <path d="M731.5 780V903" />
      </g>
      <path d="M725 835l8 8M725 897l8 8" stroke="#353c49" />
      <g fill="#3a4250" fontSize="13" textAnchor="middle">
        {GRID_X.slice(0, -1).map((x) => <text key={x} x={x + 31} y="957">100</text>)}
        <text x="757" y="816">100</text>
        <text x="757" y="877">100</text>
      </g>
      <g stroke="#8e8e8e" strokeDasharray="4 4">
        <path d="M865 810l39 54 39-54M1002.5 810v54M1119.5 810v54M1195 812l67 53 84-140M1180 500l81-49 85 138M684 562h10" />
        <path d="M1272.5 656v240M1395.5 586v310M1433.5 567v296" />
      </g>
      <path d="M1220 589.5h237M1220 725.5h237M1433.5 567v158" stroke="#c4d8e8" strokeDasharray="4 3" />
      <path d="M1100 565.5h357.5V748" stroke="#f0f0f0" strokeWidth="3" />
      <path d="M1100 749.5h358" stroke="#00a8f0" strokeWidth="3" />
      <path d="M1100 578h334q10 0 10 10v138q0 10-10 10h-334" stroke="#c8171e" strokeWidth="8" />
      <path d="M1254 580l-40 40M1269 582q3 3 3 8v134q0 5-3 8M1220 697l32 37" stroke="#c8171e" strokeWidth="4" />
      <g stroke="#f5dc32">
        {BARS.map(([x, y, r]) => <circle key={`${x}-${y}`} cx={x} cy={y} r={r} />)}
      </g>
      <path d="M1481.5 442v308M1463 442.5h37M1463 565.5h37M1463 749.5h37M1468 429l26 26M1468 552l26 26M1468 736l26 26M1100 774.5h358M1457.5 755v37M1445 787l26-26" stroke="#00f000" />
      <g fill="#00e600" fontSize="18" textAnchor="middle">
        {TAGS.map(([x, y, t]) => <text key={`${x}-${y}`} x={x} y={y + 6}>{t}</text>)}
      </g>
      <g fill="#fff" fontSize="24">
        <text x="1461" y="319" textAnchor="end">12+14C25+4C16+4C18</text>
        <text x="1488" y="511">200</text>
        <text x="1488" y="665">300</text>
        <text x="1225" y="806">700</text>
      </g>
    </svg>
  );
}

function Divider() {
  return <span className="h-6 w-px bg-[#dcdcdc]" />;
}

function SectionWindow() {
  return (
    <div className="absolute -top-[18px] right-0 bottom-[7px] left-1.5 z-10 flex flex-col border-2 border-[#bfc3c6] bg-white text-xs text-[#333] shadow-[0_0_14px_rgba(0,0,0,0.45)]">
      <div className="flex h-[27px] shrink-0 items-center justify-between border-b-2 border-[#bfc3c6] bg-linear-to-b from-white to-[#ededed] pr-2.5 pl-[17px]">
        <h2 className="text-sm text-[#222]">截面编辑</h2>
        <button aria-label="关闭"><X size={15} color="#777" strokeWidth={1.5} /></button>
      </div>
      <div className="flex h-[30px] shrink-0 items-center gap-[15px] border-b-2 border-[#c8cbce] pt-[3px] pl-[7px]">
        <button>选择截面类型</button>
        <button>保存为模板</button>
      </div>
      <div className="flex h-[33px] shrink-0 items-center border-b border-[#c8cbce] pt-0.5 pl-0.5">
        <button className="mr-1.5 h-[22px] w-[35px] rounded-sm bg-[#c5dcf4]">选择</button>
        <Divider />
        {['纵筋', '箍筋'].map((r, i) => (
          <label key={r} className={clsx('ml-2 flex items-center gap-1 text-black', i === 0 ? 'w-[58px]' : 'mr-[7px]')}>
            <input type="radio" name="rebar" defaultChecked={i === 0} className="size-3.5 appearance-none rounded-full border border-[#888] checked:bg-[#1f78e0] checked:shadow-[inset_0_0_0_3px_white]" />
            {r}
          </label>
        ))}
        <Divider />
        <button className="ml-2.5 flex items-center gap-1.5">直线 <Caret muted /></button>
        <button className="ml-[11px]">隐藏标注</button>
        <button className="ml-3.5 text-[#b5b5b5]">删除</button>
        <button className="ml-3.5">清空钢筋</button>
        <button className="ml-[15px] text-[#b5b5b5]">设置虚线边</button>
        <button className="mr-3 ml-[15px]">设置对齐边</button>
        <Divider />
        <button className="ml-3">对齐钢筋</button>
      </div>
      <div className="relative min-h-0 flex-1 overflow-hidden bg-black">
        <label className="absolute top-[9px] left-3 flex h-[26px] items-center gap-1.5 text-white">
          钢筋信息:
          <input defaultValue="2C16" className="h-[26px] w-[180px] rounded-sm bg-white pl-[7px] text-[#222]" />
        </label>
        <Drawing />
      </div>
      <div className="flex h-[30px] shrink-0 items-center bg-[#fcfcfc] pl-0.5">
        {['orthoB', 'diag', 'perp', 'plusBar'].map((n) => (
          <button key={n} aria-label={n} className="grid h-[25px] w-[25px] place-items-center rounded-sm border border-[#3f8be8] bg-[#d6e7fb]"><Icon name={n} /></button>
        ))}
        <span className="pt-0.5 pl-0.5">(X: -859 Y: 501)选择钢筋进行编辑，选择标注进行修改或移动;</span>
        <svg width="9" height="9" viewBox="0 0 9 9" className="mt-3.5 mr-1 ml-auto" aria-hidden="true">
          <path d="M6 0h2v2H6zM3 3h2v2H3zM6 3h2v2H6zM0 6h2v2H0zM3 6h2v2H3zM6 6h2v2H6z" fill="#666" />
        </svg>
      </div>
      <SectionDialog />
      {/* callout arrow over the chosen section */}
      <svg width="480" height="170" viewBox="1015 685 480 170" className="pointer-events-none absolute top-[535px] left-[503px] z-20" aria-hidden="true">
        <path d="M1022 694l18-4-2 5 182 62 268 92-269-85-183-62-3 5z" fill="#ff3b38" />
      </svg>
    </div>
  );
}

function Workspace() {
  return (
    <main className="relative flex min-w-0 flex-1 flex-col bg-black">
      <div className="mt-auto mb-[11px] h-[72px] w-2 border-y border-[#f0f] bg-[#eee]" />
      <div className="flex h-1.5 shrink-0 justify-end">
        <svg width="22" height="6" viewBox="0 0 22 6" fill="none" className="mr-auto ml-[217px]" aria-hidden="true">
          <path d="M1 0c4 6 16 6 20 0M11 0v4" stroke="#0a9a2a" />
        </svg>
        <div className="flex w-[424px] border-l border-[#f0f] bg-[#f6e58d]">
          <span className="w-[113px] border-r border-[#f0f]" />
          <span className="w-[227px] border-r border-[#f0f]" />
        </div>
        <span className="w-1.5 bg-white" />
      </div>
      <SectionWindow />
    </main>
  );
}

/* ---------- display settings ---------- */

type LayerRow = [name: string, level: 0 | 1 | 2, shape: CheckState, title?: CheckState];

const LAYERS: LayerRow[] = [
  ['所有构件', 0, 'mixed'],
  ['施工段', 1, 'mixed'],
  ['土方工程', 2, 'off'], ['基础工程', 2, 'off'], ['主体结构', 2, 'on'], ['二次结构', 2, 'off'],
  ['装饰装修', 2, 'off'], ['其它土建', 2, 'off'], ['钢筋工程', 2, 'on'],
  ['轴线', 1, 'on', 'disabled'],
  ['轴网', 2, 'on', 'disabled'], ['辅助轴线', 2, 'on', 'disabled'],
  ['柱', 1, 'on'],
  ['柱', 2, 'on'], ['构造柱', 2, 'on'], ['砌体柱', 2, 'on'], ['约束边缘非阴...', 2, 'on'],
  ['墙', 1, 'mixed'],
  ['剪力墙', 2, 'on'], ['人防门框墙', 2, 'on'], ['砌体墙', 2, 'on'], ['砌体加筋', 2, 'off'],
  ['保温墙', 2, 'on'], ['暗梁', 2, 'on'], ['墙垛', 2, 'off'], ['幕墙', 2, 'on'],
  ['门窗洞', 1, 'mixed'],
  ['门', 2, 'on'], ['窗', 2, 'on'], ['门联窗', 2, 'on'], ['墙洞', 2, 'on'],
  ['带形窗', 2, 'on'], ['带形洞', 2, 'on'], ['飘窗', 2, 'on'], ['', 2, 'off'],
];

function TreeLines({ level, last }: { level: number; last: boolean }) {
  if (level === 0) return <span className="w-0.5" />;
  const d = level === 1 ? 'M9.5 0v21M9.5 10.5h3' : `M9.5 0v21M18.5 0V${last ? 10.5 : 21}M18.5 10.5h16`;
  const w = level === 1 ? 12 : 41;
  return (
    <svg width={w} height="21" viewBox={`0 0 ${w} 21`} fill="none" stroke="#dcdcdc" className="shrink-0" aria-hidden="true">
      <path d={d} />
    </svg>
  );
}

function DisplayPanel() {
  return (
    <aside className="flex w-[277px] shrink-0 flex-col border-r border-b border-[#c4c4c4] bg-white text-xs text-[#333]">
      <Strip />
      <h2 className="h-[22px] shrink-0 border-b border-[#d4d4d4] bg-[#f0f0f0] pl-1.5 leading-[22px] text-[#777]">显示设置</h2>
      <div className="flex h-7 shrink-0 items-end gap-1 border-b border-[#c4c4c4]">
        <button className="h-6 w-[61px] rounded-t-sm border border-b-0 border-[#c4c4c4] bg-white text-[#1f78e0]">图元显示</button>
        <button className="h-[22px] w-[60px] rounded-t-sm bg-[#dedede] text-[#555]">楼层显示</button>
      </div>
      <div className="mt-px mr-0.5 flex min-h-0 flex-1 overflow-hidden border border-[#d0d0d0]">
        <table className="w-[258px] table-fixed border-collapse self-start">
          <colgroup>
            <col />
            <col className="w-[63px]" />
            <col className="w-[63px]" />
          </colgroup>
          <thead>
            <tr className="h-[21px] leading-4">
              {['图层构件', '显示图元', '显示名称'].map((h) => (
                <th key={h} className="border-r border-b border-[#dcdcdc] p-0 font-normal">{h}</th>
              ))}
            </tr>
          </thead>
          <tbody>
            {LAYERS.map(([name, level, shape, title = 'off'], i) => (
              <tr key={i} className="h-[21px] leading-none">
                <td className="border-r border-b border-[#dcdcdc] p-0">
                  <div className="-my-px flex h-5 items-center overflow-hidden whitespace-nowrap">
                    <TreeLines level={level} last={LAYERS[i + 1]?.[1] === 1} />
                    {level < 2 && (
                      <button aria-label={`折叠${name}`} className="mr-1.5 grid size-[13px] shrink-0 place-items-center rounded-xs border border-[#888] bg-white">
                        <span className="h-px w-[5px] bg-[#444]" />
                      </button>
                    )}
                    {name}
                  </div>
                </td>
                <td className="border-r border-b border-[#dcdcdc] p-0 text-center"><Check state={shape} label={`${name}显示图元`} /></td>
                <td className="border-r border-b border-[#dcdcdc] p-0 text-center"><Check state={title} label={`${name}显示名称`} /></td>
              </tr>
            ))}
          </tbody>
        </table>
        <div className="relative mt-3.5 ml-[3px] h-[186px] w-2 rounded-full bg-[#cacaca]">
          {/* volume meter that floats over the scrollbar */}
          <div className="absolute top-[121px] left-1.5 h-[57px] w-2 overflow-hidden rounded-full border border-[#666] bg-[repeating-linear-gradient(0deg,#3fae5a_0,#3fae5a_2px,#555_2px,#555_3px)]">
            <div className="h-4 bg-[#555]" />
          </div>
        </div>
      </div>
      <div className="flex h-10 shrink-0 justify-end pt-[7px] pr-2">
        <button className="h-[25px] w-[90px] rounded-sm border border-[#c4c4c4] bg-white">恢复默认设置</button>
      </div>
    </aside>
  );
}

/* ---------- footer ---------- */

const SNAPS: { icon: string; caret?: boolean; on?: boolean; muted?: boolean }[] = [
  { icon: 'ortho' }, { icon: 'roundBox', caret: true, on: true }, { icon: 'cross', muted: true },
  { icon: 'angle', caret: true }, { icon: 'plusBarD', caret: true }, { icon: 'layers' }, { icon: 'curve' },
];

function StatusBar() {
  return (
    <footer className="flex h-[31px] shrink-0 items-center bg-[#fcfcfc] pl-0.5 text-[13px] text-[#333]">
      <span className="w-[263px]">X = 1125739 Y = 1043231</span>
      <span className="w-[83px]"><span className="mr-3 text-xs">层高:</span>3.54</span>
      <span className="w-[133px]"><span className="mr-3 text-xs">标高:</span>-9.1~-5.56</span>
      <span className="w-[103px]">0</span>
      <span className="w-[103px]"><span className="mr-2 text-xs">隐藏:</span>0</span>
      <div className="flex gap-[5px]">
        {SNAPS.map((s) => (
          <button key={s.icon} aria-label={s.icon} className={clsx('flex h-[25px] items-center justify-center gap-1.5 rounded-sm border', s.caret ? 'w-[35px]' : 'w-[25px]', s.on ? 'border-[#3f8be8] bg-[#d6e7fb]' : 'border-[#999] bg-white')}>
            <Icon name={s.icon} muted={s.muted} />
            {s.caret && <Caret />}
          </button>
        ))}
      </div>
    </footer>
  );
}

function Taskbar() {
  return (
    <div className="flex h-2 shrink-0 items-end overflow-hidden bg-linear-to-r from-[#2f3a44] via-[#33353a] to-[#26383b] pl-[244px]">
      <div className="h-[5px] w-[164px] bg-[#efefef]" />
      <div className="h-[5px] w-14 bg-[#1b8cff]" />
      <div className="mr-1 ml-auto flex h-[5px] w-[154px] items-start border-r border-[#999] text-xs leading-3 text-white">
        10:28 周一
        <span className="size-1.5 rounded-full bg-[#f00]" />
      </div>
    </div>
  );
}

export default function App() {
  return (
    <div className={clsx('flex h-screen flex-col overflow-hidden bg-white', FONT)}>
      <Header />
      <Ribbon />
      <Combos />
      <div className="flex min-h-0 flex-1 bg-[#fafafa]">
        <NavPanel />
        <div className="ml-1 flex w-[286px] shrink-0 flex-col">
          <MemberPanel />
          <PropertyPanel />
        </div>
        <div className="flex w-1 shrink-0 items-center bg-[#f0f0f0]">
          <button aria-label="收起面板" className="h-[100px] w-1 bg-[#5c6670]" />
        </div>
        <Workspace />
        <DisplayPanel />
      </div>
      <StatusBar />
      <Taskbar />
    </div>
  );
}
